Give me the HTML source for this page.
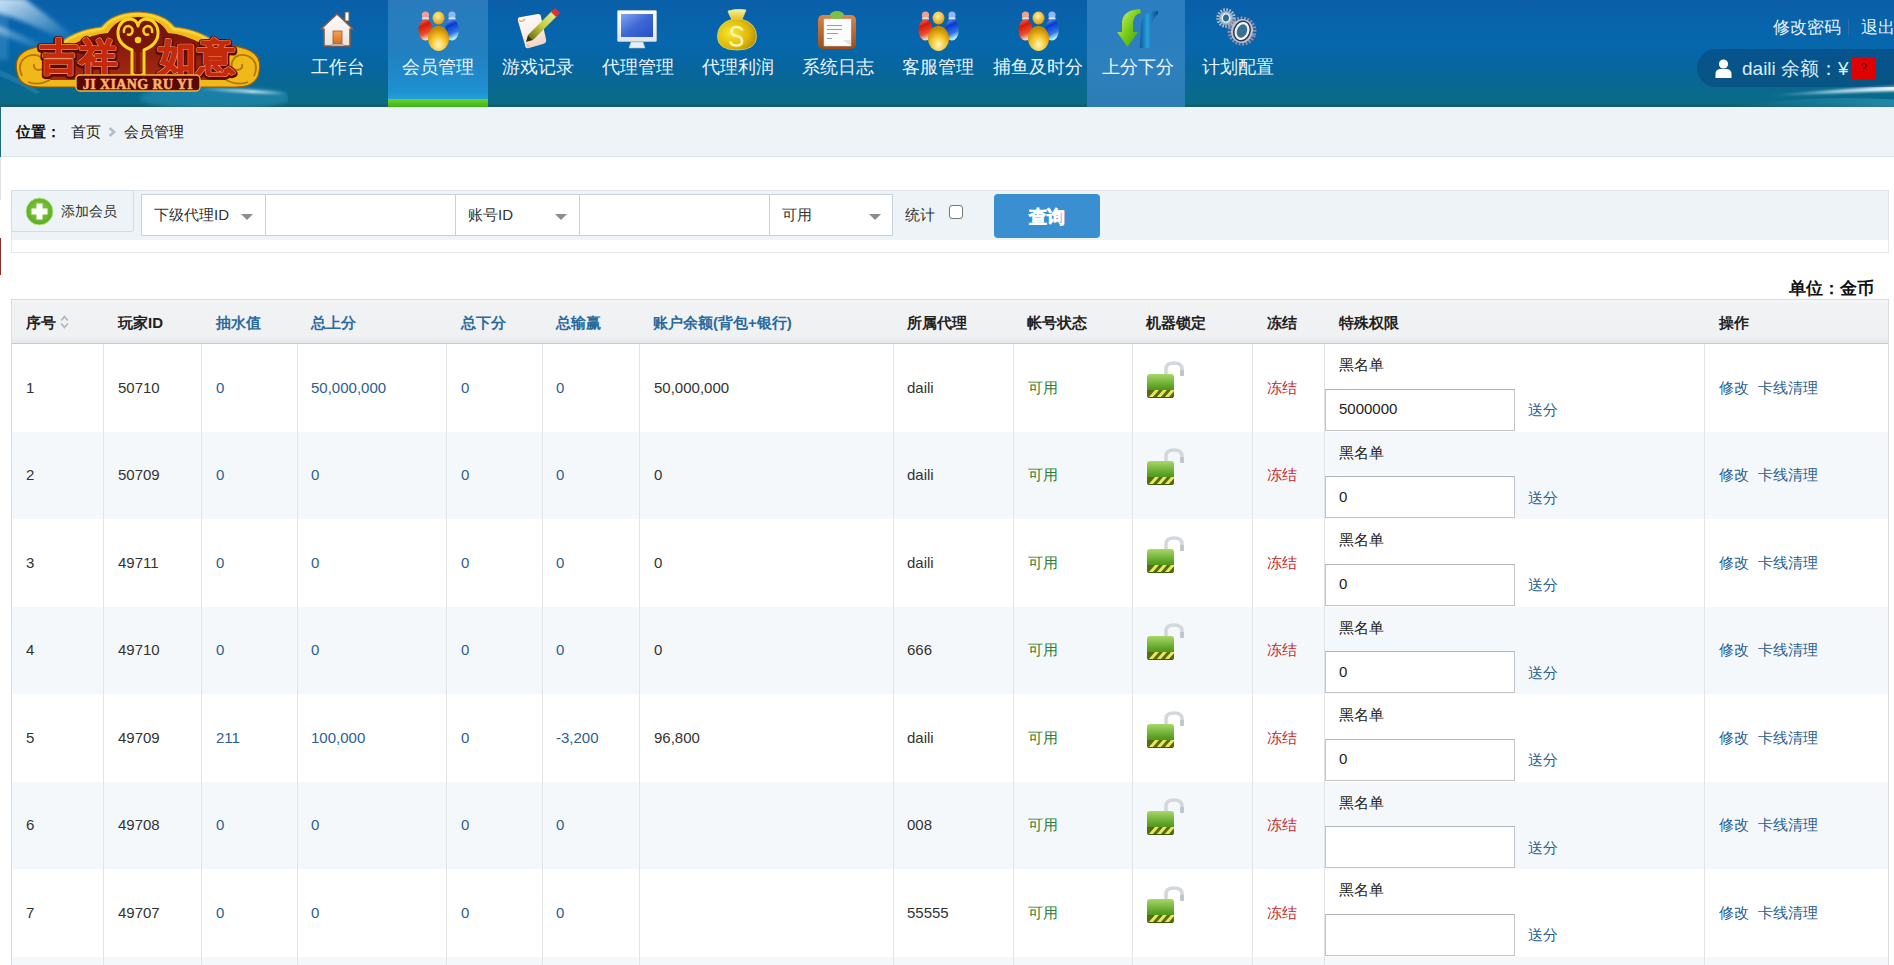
<!DOCTYPE html>
<html><head><meta charset="utf-8">
<style>
*{margin:0;padding:0;box-sizing:border-box}
html,body{width:1894px;height:965px;overflow:hidden;background:#fff;font-family:"Liberation Sans",sans-serif;color:#333}
.abs{position:absolute}
.t{position:absolute;white-space:nowrap}
#hdr{position:absolute;left:0;top:0;width:1894px;height:107px;background:linear-gradient(#0a5fa8 0%,#0667ad 40%,#07659f 62%,#0a6b86 96%,#1a5868 100%);overflow:hidden}
.nav{position:absolute;top:0;width:100px;height:107px;color:#eaf6fd;font-size:18px}
.nav .nt{position:absolute;left:0;width:100px;top:56px;line-height:22px;text-align:center;white-space:nowrap}
.nav svg{position:absolute}
.sel{position:absolute;top:194px;height:42px;background:#fff;border:1px solid #c8d2db;font-size:15px;color:#333}
.sel .v{position:absolute;left:12px;top:11px;line-height:18px;white-space:nowrap}
.sel .ar{position:absolute;left:99px;top:19px;width:0;height:0;border-left:6px solid transparent;border-right:6px solid transparent;border-top:6px solid #8c8c8c}
.inp{position:absolute;top:194px;height:42px;background:#fff;border:1px solid #c8d2db}
.th{position:absolute;top:313px;line-height:20px;font-size:15px;font-weight:bold;color:#222;white-space:nowrap}
.th.b{color:#2b6a9c}
.vl{position:absolute;width:1px;background:#e2e4e6}
.row{position:absolute;left:12px;width:1876px}
.c{position:absolute;line-height:20px;font-size:15px;white-space:nowrap;color:#333}
.lk{color:#2b6190}
.gr{color:#2f7d34}
.rd{color:#c22a2e}
</style></head><body>
<div id="hdr">
<svg class="abs" style="left:0;top:0" width="288" height="107" viewBox="0 0 288 107">
<defs>
<linearGradient id="lgold" x1="0" y1="0" x2="0" y2="1"><stop offset="0" stop-color="#fff07a"/><stop offset="0.45" stop-color="#f8c818"/><stop offset="1" stop-color="#d89a08"/></linearGradient>
<linearGradient id="lred" x1="0" y1="0" x2="0" y2="1"><stop offset="0" stop-color="#e03a12"/><stop offset="1" stop-color="#b82008"/></linearGradient>
<linearGradient id="lint" x1="0" y1="0" x2="0" y2="1"><stop offset="0" stop-color="#6a0e08"/><stop offset="1" stop-color="#a82a12"/></linearGradient>
<linearGradient id="streak" x1="0" y1="0" x2="1" y2="0"><stop offset="0" stop-color="#fff" stop-opacity="0"/><stop offset="0.6" stop-color="#e8f8ff" stop-opacity="0.85"/><stop offset="1" stop-color="#fff" stop-opacity="0"/></linearGradient>
<linearGradient id="streak2" x1="0" y1="0" x2="1" y2="1"><stop offset="0" stop-color="#f0faff" stop-opacity="0.9"/><stop offset="1" stop-color="#bfe6ff" stop-opacity="0"/></linearGradient>
</defs>
<filter id="lblur"><feGaussianBlur stdDeviation="2"/></filter><path d="M-5 -2 L24 -2 Q50 18 74 36 L62 40 Q30 22 -5 12 Z" fill="url(#streak2)" opacity="1" filter="url(#lblur)"/><path d="M-5 0 L8 0 L8 60 L-5 60 Z" fill="#a8dcff" opacity="0.18" filter="url(#lblur)"/>
<path d="M-5 24 Q25 36 52 50 L48 53 Q20 42 -5 32 Z" fill="url(#streak2)" opacity="0.55" filter="url(#lblur)"/>
<path d="M0 70 Q20 78 40 92 L36 94 Q16 82 0 76 Z" fill="#bfe6ff" opacity="0.12"/>
<ellipse cx="215" cy="98" rx="75" ry="12" fill="#3aa8d8" opacity="0.35" filter="url(#lblur)"/><path d="M200 87 Q240 89 288 92 L288 95 Q240 93 200 90 Z" fill="url(#streak)" opacity="0.9" filter="url(#glow)"/>
<filter id="glow"><feGaussianBlur stdDeviation="0.8"/></filter>
<path d="M17 72 Q13 55 30 49 Q42 44 56 48 Q72 30 102 27 Q112 13 138 12 Q164 13 174 27 Q204 30 220 48 Q234 44 246 49 Q263 55 259 72 Q257 87 236 87 L40 87 Q19 87 17 72 Z" fill="#f0b818" stroke="#a05a00" stroke-width="1.2"/>
<path d="M50 80 Q52 56 74 44 Q92 34 108 33 Q116 18 138 17 Q160 18 168 33 Q184 34 202 44 Q224 56 226 80 Z" fill="url(#lint)"/>
<path d="M56 48 Q72 32 102 29 Q112 15 138 14 Q164 15 174 29 Q204 32 220 48" fill="none" stroke="#ffe84a" stroke-width="2.2" filter="url(#glow)"/>
<g fill="none" stroke="#b87400" stroke-width="1.8">
<path d="M22 76 Q16 62 28 56 Q40 52 44 62 Q46 70 38 70 Q33 69 34 64"/><path d="M28 82 Q38 86 50 80"/>
<path d="M254 76 Q260 62 248 56 Q236 52 232 62 Q230 70 238 70 Q243 69 242 64"/><path d="M248 82 Q238 86 226 80"/>
</g>
<path d="M132 74 L132 50 Q117 44 118 31 Q120 19 131 19 Q137 20 138 26 Q139 20 145 19 Q156 19 158 31 Q159 44 144 50 L144 74 Q138 78 132 74 Z" fill="#7a160a" stroke="#ffd420" stroke-width="3" stroke-linejoin="round"/>
<g fill="none" stroke="#ffd420" stroke-width="2.4"><path d="M124 33 Q123 26 129 26 Q134 28 132 33 Q130 36 127 34"/><path d="M152 33 Q153 26 147 26 Q142 28 144 33 Q146 36 149 34"/></g>
<circle cx="138" cy="40" r="3.2" fill="#ffd420"/>
<path d="M135 52 L135 72 M141 52 L141 72" stroke="#9a2a10" stroke-width="2"/>
<g font-size="38" font-weight="bold" text-anchor="middle">
<text x="79" y="71" fill="none" stroke="#5a0a04" stroke-width="6" stroke-linejoin="round" letter-spacing="1">吉祥</text>
<text x="197" y="71" fill="none" stroke="#5a0a04" stroke-width="6" stroke-linejoin="round" letter-spacing="1">如意</text>
<text x="79" y="70" fill="url(#lred)" stroke="#ffa878" stroke-width="2.4" paint-order="stroke" stroke-linejoin="round" letter-spacing="1">吉祥</text>
<text x="197" y="70" fill="url(#lred)" stroke="#ffa878" stroke-width="2.4" paint-order="stroke" stroke-linejoin="round" letter-spacing="1">如意</text>
<text x="79" y="70" fill="url(#lred)" stroke="#c42a0a" stroke-width="1.3" letter-spacing="1">吉祥</text>
<text x="197" y="70" fill="url(#lred)" stroke="#c42a0a" stroke-width="1.3" letter-spacing="1">如意</text>
</g>
<rect x="76" y="75" width="124" height="16" rx="4" fill="#5a0a06" stroke="#f3b63a" stroke-width="1.4"/>
<text x="138" y="88.5" text-anchor="middle" font-family="Liberation Serif" font-size="14" font-weight="bold" fill="#ffb26a" stroke="#ffb26a" stroke-width="0.5" letter-spacing="0.4" transform="translate(138 0) scale(1 1.05) translate(-138 -4)">JI XIANG RU YI</text>
</svg>
<div class="nav" style="left:288px;">
<svg style="left:29px;top:7px" width="40" height="40" viewBox="0 0 40 40">
<defs><linearGradient id="hw" x1="0" y1="0" x2="0" y2="1"><stop offset="0" stop-color="#ffffff"/><stop offset="1" stop-color="#e9e2dc"/></linearGradient>
<linearGradient id="hd" x1="0" y1="0" x2="0" y2="1"><stop offset="0" stop-color="#f2a35a"/><stop offset="1" stop-color="#d66e22"/></linearGradient></defs>
<rect x="28" y="5" width="4" height="9" fill="#fff" stroke="#8a5a44" stroke-width="1"/>
<path d="M4 22 L20 7 L36 22 L33 22 L33 39 L7 39 L7 22 Z" fill="url(#hw)" stroke="#8a5a44" stroke-width="1.6" stroke-linejoin="round"/>
<rect x="16" y="24" width="9" height="13" fill="url(#hd)" stroke="#a8561c" stroke-width="0.8"/>
<rect x="14" y="37" width="13" height="2" fill="#b9b3ae"/>
</svg>
<div class="nt">工作台</div>
</div>
<div class="nav" style="left:388px;background:linear-gradient(#2a7bbd 0%,#2280c0 50%,#1e90d0 85%,#22a0dc 92%);">
<svg style="left:30px;top:10px" width="42" height="42" viewBox="0 0 42 42">
<defs>
<linearGradient id="pr" x1="0" y1="0" x2="0.3" y2="1"><stop offset="0" stop-color="#ff8070"/><stop offset="0.35" stop-color="#d81808"/><stop offset="0.75" stop-color="#e85030"/><stop offset="1" stop-color="#ffd0b0"/></linearGradient>
<linearGradient id="pb" x1="0" y1="0" x2="0.3" y2="1"><stop offset="0" stop-color="#80b8ff"/><stop offset="0.35" stop-color="#0838d0"/><stop offset="0.75" stop-color="#3078e0"/><stop offset="1" stop-color="#b0f0ff"/></linearGradient>
<radialGradient id="py" cx="0.5" cy="0.75" r="0.65"><stop offset="0" stop-color="#fff8c0"/><stop offset="0.5" stop-color="#f8c830"/><stop offset="1" stop-color="#c88a00"/></radialGradient>
<radialGradient id="pyh" cx="0.45" cy="0.35" r="0.6"><stop offset="0" stop-color="#fff4a0"/><stop offset="1" stop-color="#e0a010"/></radialGradient>
</defs>
<circle cx="7.5" cy="5" r="3.6" fill="#f0a090"/><rect x="4" y="7.5" width="7" height="2" fill="#ffffff" opacity="0.8"/>
<ellipse cx="7.5" cy="20" rx="7" ry="10.5" fill="url(#pr)"/>
<circle cx="34" cy="5" r="3.6" fill="#90b8f0"/><rect x="30.5" y="7.5" width="7" height="2" fill="#ffffff" opacity="0.8"/>
<ellipse cx="34" cy="20" rx="6.8" ry="10.5" fill="url(#pb)"/>
<ellipse cx="20.5" cy="8" rx="6" ry="6.5" fill="url(#pyh)"/>
<ellipse cx="20.5" cy="28.5" rx="10.5" ry="12.5" fill="url(#py)"/>
</svg>
<div class="nt">会员管理</div>
<div class="abs" style="left:0;top:99px;width:100px;height:8px;background:linear-gradient(#6fd02a,#3cb518)"></div>
</div>
<div class="nav" style="left:488px;">
<svg style="left:29px;top:8px" width="44" height="42" viewBox="0 0 44 42">
<defs><linearGradient id="sc" x1="0" y1="0" x2="0.4" y2="1"><stop offset="0" stop-color="#ffffff"/><stop offset="0.6" stop-color="#fbeee8"/><stop offset="1" stop-color="#f0d8c8"/></linearGradient>
<linearGradient id="pc" x1="0" y1="1" x2="1" y2="0"><stop offset="0" stop-color="#5a6a10"/><stop offset="0.5" stop-color="#c8d040"/><stop offset="1" stop-color="#e8f0a0"/></linearGradient></defs>
<path d="M1 13 Q0 9 4 9 L21 6 Q24 6 24 9 L29 31 Q30 35 26 36 L12 40 Q8 41 8 37 Z" fill="url(#sc)"/>
<path d="M2 12 Q5 15 8 11" fill="none" stroke="#e8b090" stroke-width="1.5"/>
<path d="M9 37 Q13 34 12 40" fill="#f0c0a8"/>
<path d="M11 27 L35 3 L40 8 L16 32 Z" fill="url(#pc)"/>
<path d="M34 4 L38 0 L43 5 L39 9 Z" fill="#e03030"/>
<path d="M11 27 L16 32 L9 34 Z" fill="#3a3010"/>
</svg>
<div class="nt">游戏记录</div>
</div>
<div class="nav" style="left:588px;">
<svg style="left:29px;top:10px" width="40" height="40" viewBox="0 0 40 40">
<defs><linearGradient id="ms" x1="0" y1="0" x2="1" y2="1"><stop offset="0" stop-color="#7fa6ee"/><stop offset="0.5" stop-color="#3d66d6"/><stop offset="1" stop-color="#2a4fc0"/></linearGradient>
<linearGradient id="mf" x1="0" y1="0" x2="0" y2="1"><stop offset="0" stop-color="#ffffff"/><stop offset="1" stop-color="#dfe6ee"/></linearGradient></defs>
<rect x="0.5" y="0.5" width="39" height="31" rx="1" fill="url(#mf)" stroke="#b8c4d0" stroke-width="0.8"/>
<rect x="4" y="4" width="32" height="23" fill="url(#ms)"/>
<path d="M14 32 L26 32 L28 38 L12 38 Z" fill="#e8eef4" stroke="#b0bcc8" stroke-width="0.6"/>
</svg>
<div class="nt">代理管理</div>
</div>
<div class="nav" style="left:688px;">
<svg style="left:28px;top:9px" width="42" height="42" viewBox="0 0 42 42">
<defs><radialGradient id="mb" cx="0.35" cy="0.45" r="0.75"><stop offset="0" stop-color="#f8e830"/><stop offset="0.6" stop-color="#e0b808"/><stop offset="1" stop-color="#b08000"/></radialGradient>
<linearGradient id="mk" x1="0" y1="0" x2="0" y2="1"><stop offset="0" stop-color="#f0f8a0"/><stop offset="1" stop-color="#f0b010"/></linearGradient></defs>
<path d="M12 2 Q21 -1 30 1 Q28 6 25 12 L17 12 Q13 6 12 2 Z" fill="url(#mk)" stroke="#d8e890" stroke-width="0.8"/>
<path d="M17 10 Q1.5 14 1.5 27.5 Q1.5 41 21 41 Q40.5 41 40.5 27.5 Q40.5 14 25 10 Z" fill="url(#mb)" stroke="#c8e070" stroke-width="0.8"/>
<path d="M26 20.5 Q24 18 20.5 18 Q15.5 18 15.5 22.5 Q15.5 26 20.5 27 Q26 28 26 32 Q26 36.5 20.5 36.5 Q16 36.5 14.5 33.5" fill="none" stroke="#fff4b0" stroke-width="2.6" stroke-linecap="round"/>
</svg>
<div class="nt">代理利润</div>
</div>
<div class="nav" style="left:788px;">
<svg style="left:29px;top:10px" width="40" height="40" viewBox="0 0 40 40">
<defs><linearGradient id="cb" x1="0" y1="0" x2="0" y2="1"><stop offset="0" stop-color="#d8874a"/><stop offset="1" stop-color="#9a4d1c"/></linearGradient></defs>
<rect x="1" y="5" width="38" height="34" rx="5" fill="url(#cb)"/>
<rect x="7" y="9" width="27" height="27" fill="#fafcfe" stroke="#d0d8e0" stroke-width="0.5"/>
<path d="M26 30 L34 30 L34 36 Z" fill="#dfe4ea"/>
<ellipse cx="20" cy="5" rx="7" ry="4" fill="#7cc04a"/>
<rect x="10" y="15" width="15" height="1" fill="#8aa0c0"/><rect x="10" y="19" width="15" height="1" fill="#8aa0c0"/>
<rect x="10" y="23" width="11" height="1" fill="#8aa0c0"/><rect x="10" y="28" width="5" height="1" fill="#8aa0c0"/>
</svg>
<div class="nt">系统日志</div>
</div>
<div class="nav" style="left:888px;">
<svg style="left:30px;top:10px" width="42" height="42" viewBox="0 0 42 42">
<defs>
<linearGradient id="pr" x1="0" y1="0" x2="0.3" y2="1"><stop offset="0" stop-color="#ff8070"/><stop offset="0.35" stop-color="#d81808"/><stop offset="0.75" stop-color="#e85030"/><stop offset="1" stop-color="#ffd0b0"/></linearGradient>
<linearGradient id="pb" x1="0" y1="0" x2="0.3" y2="1"><stop offset="0" stop-color="#80b8ff"/><stop offset="0.35" stop-color="#0838d0"/><stop offset="0.75" stop-color="#3078e0"/><stop offset="1" stop-color="#b0f0ff"/></linearGradient>
<radialGradient id="py" cx="0.5" cy="0.75" r="0.65"><stop offset="0" stop-color="#fff8c0"/><stop offset="0.5" stop-color="#f8c830"/><stop offset="1" stop-color="#c88a00"/></radialGradient>
<radialGradient id="pyh" cx="0.45" cy="0.35" r="0.6"><stop offset="0" stop-color="#fff4a0"/><stop offset="1" stop-color="#e0a010"/></radialGradient>
</defs>
<circle cx="7.5" cy="5" r="3.6" fill="#f0a090"/><rect x="4" y="7.5" width="7" height="2" fill="#ffffff" opacity="0.8"/>
<ellipse cx="7.5" cy="20" rx="7" ry="10.5" fill="url(#pr)"/>
<circle cx="34" cy="5" r="3.6" fill="#90b8f0"/><rect x="30.5" y="7.5" width="7" height="2" fill="#ffffff" opacity="0.8"/>
<ellipse cx="34" cy="20" rx="6.8" ry="10.5" fill="url(#pb)"/>
<ellipse cx="20.5" cy="8" rx="6" ry="6.5" fill="url(#pyh)"/>
<ellipse cx="20.5" cy="28.5" rx="10.5" ry="12.5" fill="url(#py)"/>
</svg>
<div class="nt">客服管理</div>
</div>
<div class="nav" style="left:988px;">
<svg style="left:30px;top:10px" width="42" height="42" viewBox="0 0 42 42">
<defs>
<linearGradient id="pr" x1="0" y1="0" x2="0.3" y2="1"><stop offset="0" stop-color="#ff8070"/><stop offset="0.35" stop-color="#d81808"/><stop offset="0.75" stop-color="#e85030"/><stop offset="1" stop-color="#ffd0b0"/></linearGradient>
<linearGradient id="pb" x1="0" y1="0" x2="0.3" y2="1"><stop offset="0" stop-color="#80b8ff"/><stop offset="0.35" stop-color="#0838d0"/><stop offset="0.75" stop-color="#3078e0"/><stop offset="1" stop-color="#b0f0ff"/></linearGradient>
<radialGradient id="py" cx="0.5" cy="0.75" r="0.65"><stop offset="0" stop-color="#fff8c0"/><stop offset="0.5" stop-color="#f8c830"/><stop offset="1" stop-color="#c88a00"/></radialGradient>
<radialGradient id="pyh" cx="0.45" cy="0.35" r="0.6"><stop offset="0" stop-color="#fff4a0"/><stop offset="1" stop-color="#e0a010"/></radialGradient>
</defs>
<circle cx="7.5" cy="5" r="3.6" fill="#f0a090"/><rect x="4" y="7.5" width="7" height="2" fill="#ffffff" opacity="0.8"/>
<ellipse cx="7.5" cy="20" rx="7" ry="10.5" fill="url(#pr)"/>
<circle cx="34" cy="5" r="3.6" fill="#90b8f0"/><rect x="30.5" y="7.5" width="7" height="2" fill="#ffffff" opacity="0.8"/>
<ellipse cx="34" cy="20" rx="6.8" ry="10.5" fill="url(#pb)"/>
<ellipse cx="20.5" cy="8" rx="6" ry="6.5" fill="url(#pyh)"/>
<ellipse cx="20.5" cy="28.5" rx="10.5" ry="12.5" fill="url(#py)"/>
</svg>
<div class="nt">捕鱼及时分</div>
</div>
<div class="nav" style="left:1088px;">
<div class="abs" style="left:-1px;top:0;width:98px;height:107px;background:linear-gradient(#2b7ec0,#2d80bd 60%,#2b7db4)"></div>
<svg style="left:29px;top:8px" width="42" height="42" viewBox="0 0 42 42">
<defs><linearGradient id="ag" x1="0" y1="0" x2="1" y2="1"><stop offset="0" stop-color="#d8f880"/><stop offset="0.5" stop-color="#7acc18"/><stop offset="1" stop-color="#3a9a10"/></linearGradient>
<linearGradient id="ab" x1="0" y1="0" x2="1" y2="0"><stop offset="0" stop-color="#0a5a98"/><stop offset="0.4" stop-color="#2aa0e0"/><stop offset="1" stop-color="#0a4a88"/></linearGradient></defs>
<path d="M23 40 L34 40 L34 22 Q35 10 41 6 L41 3 Q26 3 24 17 Z" fill="url(#ab)"/>
<path d="M23 1 Q6 2 5 14 L5 24 L0 24 L10.5 39 L21 24 L16 24 L16 14 Q17 6 24 5 Z" fill="url(#ag)"/>
</svg>
<div class="nt">上分下分</div>
</div>
<div class="nav" style="left:1188px;">
<svg style="left:28px;top:7px" width="42" height="42" viewBox="0 0 42 42">
<defs><radialGradient id="gg" cx="0.5" cy="0.5" r="0.5"><stop offset="0" stop-color="#ffffff"/><stop offset="0.6" stop-color="#c8d4e0"/><stop offset="1" stop-color="#8a98a8"/></radialGradient></defs>
<g transform="translate(10,11)">
<circle r="8" fill="none" stroke="#b0bccc" stroke-width="3.5" stroke-dasharray="1.6 1.3"/>
<circle r="7" fill="url(#gg)"/><ellipse rx="3.6" ry="4.2" fill="#2a6a8a" stroke="#e8f4f8" stroke-width="1.2"/></g>
<g transform="translate(26,24) rotate(20)">
<circle r="12.5" fill="none" stroke="#9a8ca8" stroke-width="4" stroke-dasharray="1.8 1.5"/>
<ellipse rx="11" ry="12" fill="#b8c4d4"/><ellipse rx="8" ry="10" fill="#f0f4f8" stroke="#303848" stroke-width="1.5"/><ellipse rx="5" ry="7" fill="#3a7090"/></g>
</svg>
<div class="nt">计划配置</div>
</div>
<div class="t" style="left:1773px;top:17px;font-size:16.5px;line-height:20px;color:#e6f2fb">修改密码</div>
<div class="abs" style="left:1848px;top:19px;width:1px;height:16px;background:#2f6fa6"></div>
<div class="t" style="left:1861px;top:17px;font-size:16.5px;line-height:20px;color:#e6f2fb">退出</div>
<svg class="abs" style="left:1690px;top:70px" width="204" height="37" viewBox="0 0 204 37"><defs><linearGradient id="sw" x1="0" y1="0" x2="1" y2="0"><stop offset="0" stop-color="#bfeaff" stop-opacity="0"/><stop offset="0.5" stop-color="#d8f4ff" stop-opacity="0.7"/><stop offset="1" stop-color="#f4fcff" stop-opacity="1"/></linearGradient><linearGradient id="sw2" x1="0" y1="0" x2="1" y2="0"><stop offset="0" stop-color="#30a0d0" stop-opacity="0"/><stop offset="1" stop-color="#40b0e0" stop-opacity="0.45"/></linearGradient><filter id="swb" x="-0.2" y="-1" width="1.4" height="3"><feGaussianBlur stdDeviation="1.1"/></filter></defs><path d="M40 37 Q120 24 210 30 L210 37 Z" fill="url(#sw2)"/><path d="M80 25 Q150 19 210 15 L210 21 Q150 23 80 26 Z" fill="url(#sw)" filter="url(#swb)"/></svg>
<div class="abs" style="left:1697px;top:49px;width:220px;height:38px;border-radius:19px;background:rgba(8,70,120,0.55)"></div>
<svg class="abs" style="left:1715px;top:59px" width="17" height="19" viewBox="0 0 17 19"><circle cx="8.5" cy="5" r="4.6" fill="#fff"/><path d="M0.5 19 L0.5 15 Q0.5 10.5 5 10 L12 10 Q16.5 10.5 16.5 15 L16.5 19 Z" fill="#fff"/></svg>
<div class="t" style="left:1742px;top:58px;font-size:19px;line-height:22px;color:#d8eefb">daili 余额：¥</div>
<div class="abs" style="left:1851px;top:57px;width:25px;height:23px;border-radius:3px;background:#e00202;color:#5a0000;font-size:12px;line-height:23px;text-align:center">?</div>

</div>
<div class="abs" style="left:0;top:107px;width:1894px;height:50px;background:#eef3f8;border-top:1px solid #e4f7fb;border-bottom:1px solid #dde4eb"></div>
<div class="abs" style="left:0;top:107px;width:1px;height:50px;background:#1f6a80"></div>
<div class="t" style="left:16px;top:122px;font-size:14.5px;line-height:20px;font-weight:bold;color:#111">位置：</div>
<div class="t" style="left:71px;top:122px;font-size:15px;line-height:20px;color:#222">首页</div>
<svg class="abs" style="left:108px;top:127px" width="8" height="10" viewBox="0 0 8 10"><path d="M1.5 1 L6 5 L1.5 9" fill="none" stroke="#b4bec6" stroke-width="2.6"/></svg>
<div class="t" style="left:124px;top:122px;font-size:15px;line-height:20px;color:#222">会员管理</div>

<div class="abs" style="left:0;top:157px;width:1px;height:43px;background:#dfe3e6"></div>
<div class="abs" style="left:0;top:238px;width:1px;height:37px;background:#8a2a22"></div>
<div class="abs" style="left:11px;top:190px;width:1878px;height:51px;background:#eef3f8;border:1px solid #dfe5eb"></div>
<div class="abs" style="left:11px;top:240px;width:1878px;height:13px;background:#fff;border:1px solid #e6e9ec;border-top:none"></div>
<div class="abs" style="left:11px;top:190px;width:123px;height:42px;background:#eef3f8;border:1px solid #d3dbe3;border-radius:2px"></div>
<svg class="abs" style="left:25px;top:197px" width="29" height="29" viewBox="0 0 29 29"><defs><radialGradient id="pg" cx="0.5" cy="0.45" r="0.55"><stop offset="0" stop-color="#8ed04a"/><stop offset="1" stop-color="#5aaa22"/></radialGradient></defs><circle cx="14.5" cy="14.5" r="13.5" fill="url(#pg)" stroke="#b8e890" stroke-width="1"/><path d="M11.5 6.5 H17.5 V11.5 H22.5 V17.5 H17.5 V22.5 H11.5 V17.5 H6.5 V11.5 H11.5 Z" fill="#fff"/></svg>
<div class="t" style="left:61px;top:201px;font-size:14px;line-height:20px;color:#333">添加会员</div>
<div class="sel" style="left:141px;width:125px"><div class="v">下级代理ID</div><div class="ar"></div></div>
<div class="inp" style="left:265px;width:191px"></div>
<div class="sel" style="left:455px;width:125px"><div class="v">账号ID</div><div class="ar"></div></div>
<div class="inp" style="left:579px;width:191px"></div>
<div class="sel" style="left:769px;width:124px"><div class="v">可用</div><div class="ar"></div></div>
<div class="t" style="left:905px;top:205px;font-size:15px;line-height:20px;color:#333">统计</div>
<div class="abs" style="left:949px;top:205px;width:14px;height:14px;border:1px solid #767676;border-radius:3px;background:#fff"></div>
<div class="abs" style="left:994px;top:194px;width:106px;height:44px;border-radius:4px;background:#3a8fd1;color:#fff;font-size:18px;font-weight:bold;line-height:46px;text-align:center;-webkit-text-stroke:0.7px #fff">查询</div>

<div class="t" style="left:1789px;top:278px;font-size:17px;line-height:22px;font-weight:bold;color:#111">单位：金币</div>
<div class="abs" style="left:11px;top:299px;width:1878px;height:700px;border:1px solid #d8dcdf;border-bottom:none"></div>
<div class="abs" style="left:12px;top:300px;width:1876px;height:43px;background:linear-gradient(#f8f9fa 0px,#f0f2f4 3px,#eff1f3 36px,#e4e7e9 43px)"></div>
<div class="abs" style="left:12px;top:343px;width:1876px;height:1px;background:#c6cacd"></div>
<div class="th" style="left:26px">序号</div>
<div class="th" style="left:118px">玩家ID</div>
<div class="th b" style="left:216px">抽水值</div>
<div class="th b" style="left:311px">总上分</div>
<div class="th b" style="left:461px">总下分</div>
<div class="th b" style="left:556px">总输赢</div>
<div class="th b" style="left:653px">账户余额(背包+银行)</div>
<div class="th" style="left:907px">所属代理</div>
<div class="th" style="left:1027px">帐号状态</div>
<div class="th" style="left:1146px">机器锁定</div>
<div class="th" style="left:1267px">冻结</div>
<div class="th" style="left:1339px">特殊权限</div>
<div class="th" style="left:1719px">操作</div>
<svg class="abs" style="left:60px;top:315px" width="9" height="14" viewBox="0 0 9 14"><path d="M1.2 5.5 L4.5 1.5 L7.8 5.5 M1.2 8.5 L4.5 12.5 L7.8 8.5" fill="none" stroke="#b4b4b4" stroke-width="1.7"/></svg>
<div class="row" style="top:344.0px;height:87.5px;background:#ffffff"></div>
<div class="c " style="left:26px;top:377.75px">1</div>
<div class="c " style="left:118px;top:377.75px">50710</div>
<div class="c lk" style="left:216px;top:377.75px">0</div>
<div class="c lk" style="left:311px;top:377.75px">50,000,000</div>
<div class="c lk" style="left:461px;top:377.75px">0</div>
<div class="c lk" style="left:556px;top:377.75px">0</div>
<div class="c " style="left:654px;top:377.75px">50,000,000</div>
<div class="c " style="left:907px;top:377.75px">daili</div>
<div class="c gr" style="left:1028px;top:377.75px">可用</div>
<div class="c rd" style="left:1267px;top:377.75px">冻结</div>
<svg class="abs" style="left:1146px;top:360.75px" width="40" height="40" viewBox="0 0 40 40">
<defs><linearGradient id="lkg0" x1="0" y1="0" x2="0" y2="1"><stop offset="0" stop-color="#a8d86a"/><stop offset="0.55" stop-color="#5aa024"/><stop offset="1" stop-color="#3a7a10"/></linearGradient>
<clipPath id="lkc0"><rect x="1" y="13" width="27" height="24" rx="3"/></clipPath></defs>
<path d="M20 14 L20 8 Q20 2 28 2 Q36 2 36 8 L36 14" fill="none" stroke="#d4d8dc" stroke-width="3.6"/>
<rect x="34.2" y="9" width="3.6" height="6" fill="#bfc4c8"/>
<rect x="1" y="13" width="27" height="24" rx="3" fill="url(#lkg0)"/>
<g clip-path="url(#lkc0)"><rect x="1" y="29" width="27" height="9" fill="#5a6a12"/><path d="M2 37 L9 29 L13 29 L6 37 Z M10 37 L17 29 L21 29 L14 37 Z M18 37 L25 29 L29 29 L22 37 Z" fill="#e6e860"/><rect x="1" y="36" width="27" height="1.5" fill="#3a5a10"/></g>
</svg>
<div class="c" style="left:1339px;top:355.0px;font-size:15px;color:#222">黑名单</div>
<div class="abs" style="left:1325px;top:389px;width:190px;height:42px;background:#fff;border:1px solid #c4c4c4;border-top-color:#aeb4b8"></div>
<div class="c" style="left:1339px;top:399.0px;font-size:15px;color:#222">5000000</div>
<div class="c lk" style="left:1528px;top:400.0px;font-size:15px">送分</div>
<div class="c lk" style="left:1719px;top:377.75px">修改</div>
<div class="c lk" style="left:1758px;top:377.75px">卡线清理</div>
<div class="row" style="top:431.5px;height:87.5px;background:#f5f8fb"></div>
<div class="c " style="left:26px;top:465.25px">2</div>
<div class="c " style="left:118px;top:465.25px">50709</div>
<div class="c lk" style="left:216px;top:465.25px">0</div>
<div class="c lk" style="left:311px;top:465.25px">0</div>
<div class="c lk" style="left:461px;top:465.25px">0</div>
<div class="c lk" style="left:556px;top:465.25px">0</div>
<div class="c " style="left:654px;top:465.25px">0</div>
<div class="c " style="left:907px;top:465.25px">daili</div>
<div class="c gr" style="left:1028px;top:465.25px">可用</div>
<div class="c rd" style="left:1267px;top:465.25px">冻结</div>
<svg class="abs" style="left:1146px;top:448.25px" width="40" height="40" viewBox="0 0 40 40">
<defs><linearGradient id="lkg1" x1="0" y1="0" x2="0" y2="1"><stop offset="0" stop-color="#a8d86a"/><stop offset="0.55" stop-color="#5aa024"/><stop offset="1" stop-color="#3a7a10"/></linearGradient>
<clipPath id="lkc1"><rect x="1" y="13" width="27" height="24" rx="3"/></clipPath></defs>
<path d="M20 14 L20 8 Q20 2 28 2 Q36 2 36 8 L36 14" fill="none" stroke="#d4d8dc" stroke-width="3.6"/>
<rect x="34.2" y="9" width="3.6" height="6" fill="#bfc4c8"/>
<rect x="1" y="13" width="27" height="24" rx="3" fill="url(#lkg1)"/>
<g clip-path="url(#lkc1)"><rect x="1" y="29" width="27" height="9" fill="#5a6a12"/><path d="M2 37 L9 29 L13 29 L6 37 Z M10 37 L17 29 L21 29 L14 37 Z M18 37 L25 29 L29 29 L22 37 Z" fill="#e6e860"/><rect x="1" y="36" width="27" height="1.5" fill="#3a5a10"/></g>
</svg>
<div class="c" style="left:1339px;top:442.5px;font-size:15px;color:#222">黑名单</div>
<div class="abs" style="left:1325px;top:476px;width:190px;height:42px;background:#fff;border:1px solid #c4c4c4;border-top-color:#aeb4b8"></div>
<div class="c" style="left:1339px;top:486.5px;font-size:15px;color:#222">0</div>
<div class="c lk" style="left:1528px;top:487.5px;font-size:15px">送分</div>
<div class="c lk" style="left:1719px;top:465.25px">修改</div>
<div class="c lk" style="left:1758px;top:465.25px">卡线清理</div>
<div class="row" style="top:519.0px;height:87.5px;background:#ffffff"></div>
<div class="c " style="left:26px;top:552.75px">3</div>
<div class="c " style="left:118px;top:552.75px">49711</div>
<div class="c lk" style="left:216px;top:552.75px">0</div>
<div class="c lk" style="left:311px;top:552.75px">0</div>
<div class="c lk" style="left:461px;top:552.75px">0</div>
<div class="c lk" style="left:556px;top:552.75px">0</div>
<div class="c " style="left:654px;top:552.75px">0</div>
<div class="c " style="left:907px;top:552.75px">daili</div>
<div class="c gr" style="left:1028px;top:552.75px">可用</div>
<div class="c rd" style="left:1267px;top:552.75px">冻结</div>
<svg class="abs" style="left:1146px;top:535.75px" width="40" height="40" viewBox="0 0 40 40">
<defs><linearGradient id="lkg2" x1="0" y1="0" x2="0" y2="1"><stop offset="0" stop-color="#a8d86a"/><stop offset="0.55" stop-color="#5aa024"/><stop offset="1" stop-color="#3a7a10"/></linearGradient>
<clipPath id="lkc2"><rect x="1" y="13" width="27" height="24" rx="3"/></clipPath></defs>
<path d="M20 14 L20 8 Q20 2 28 2 Q36 2 36 8 L36 14" fill="none" stroke="#d4d8dc" stroke-width="3.6"/>
<rect x="34.2" y="9" width="3.6" height="6" fill="#bfc4c8"/>
<rect x="1" y="13" width="27" height="24" rx="3" fill="url(#lkg2)"/>
<g clip-path="url(#lkc2)"><rect x="1" y="29" width="27" height="9" fill="#5a6a12"/><path d="M2 37 L9 29 L13 29 L6 37 Z M10 37 L17 29 L21 29 L14 37 Z M18 37 L25 29 L29 29 L22 37 Z" fill="#e6e860"/><rect x="1" y="36" width="27" height="1.5" fill="#3a5a10"/></g>
</svg>
<div class="c" style="left:1339px;top:530.0px;font-size:15px;color:#222">黑名单</div>
<div class="abs" style="left:1325px;top:564px;width:190px;height:42px;background:#fff;border:1px solid #c4c4c4;border-top-color:#aeb4b8"></div>
<div class="c" style="left:1339px;top:574.0px;font-size:15px;color:#222">0</div>
<div class="c lk" style="left:1528px;top:575.0px;font-size:15px">送分</div>
<div class="c lk" style="left:1719px;top:552.75px">修改</div>
<div class="c lk" style="left:1758px;top:552.75px">卡线清理</div>
<div class="row" style="top:606.5px;height:87.5px;background:#f5f8fb"></div>
<div class="c " style="left:26px;top:640.25px">4</div>
<div class="c " style="left:118px;top:640.25px">49710</div>
<div class="c lk" style="left:216px;top:640.25px">0</div>
<div class="c lk" style="left:311px;top:640.25px">0</div>
<div class="c lk" style="left:461px;top:640.25px">0</div>
<div class="c lk" style="left:556px;top:640.25px">0</div>
<div class="c " style="left:654px;top:640.25px">0</div>
<div class="c " style="left:907px;top:640.25px">666</div>
<div class="c gr" style="left:1028px;top:640.25px">可用</div>
<div class="c rd" style="left:1267px;top:640.25px">冻结</div>
<svg class="abs" style="left:1146px;top:623.25px" width="40" height="40" viewBox="0 0 40 40">
<defs><linearGradient id="lkg3" x1="0" y1="0" x2="0" y2="1"><stop offset="0" stop-color="#a8d86a"/><stop offset="0.55" stop-color="#5aa024"/><stop offset="1" stop-color="#3a7a10"/></linearGradient>
<clipPath id="lkc3"><rect x="1" y="13" width="27" height="24" rx="3"/></clipPath></defs>
<path d="M20 14 L20 8 Q20 2 28 2 Q36 2 36 8 L36 14" fill="none" stroke="#d4d8dc" stroke-width="3.6"/>
<rect x="34.2" y="9" width="3.6" height="6" fill="#bfc4c8"/>
<rect x="1" y="13" width="27" height="24" rx="3" fill="url(#lkg3)"/>
<g clip-path="url(#lkc3)"><rect x="1" y="29" width="27" height="9" fill="#5a6a12"/><path d="M2 37 L9 29 L13 29 L6 37 Z M10 37 L17 29 L21 29 L14 37 Z M18 37 L25 29 L29 29 L22 37 Z" fill="#e6e860"/><rect x="1" y="36" width="27" height="1.5" fill="#3a5a10"/></g>
</svg>
<div class="c" style="left:1339px;top:617.5px;font-size:15px;color:#222">黑名单</div>
<div class="abs" style="left:1325px;top:651px;width:190px;height:42px;background:#fff;border:1px solid #c4c4c4;border-top-color:#aeb4b8"></div>
<div class="c" style="left:1339px;top:661.5px;font-size:15px;color:#222">0</div>
<div class="c lk" style="left:1528px;top:662.5px;font-size:15px">送分</div>
<div class="c lk" style="left:1719px;top:640.25px">修改</div>
<div class="c lk" style="left:1758px;top:640.25px">卡线清理</div>
<div class="row" style="top:694.0px;height:87.5px;background:#ffffff"></div>
<div class="c " style="left:26px;top:727.75px">5</div>
<div class="c " style="left:118px;top:727.75px">49709</div>
<div class="c lk" style="left:216px;top:727.75px">211</div>
<div class="c lk" style="left:311px;top:727.75px">100,000</div>
<div class="c lk" style="left:461px;top:727.75px">0</div>
<div class="c lk" style="left:556px;top:727.75px">-3,200</div>
<div class="c " style="left:654px;top:727.75px">96,800</div>
<div class="c " style="left:907px;top:727.75px">daili</div>
<div class="c gr" style="left:1028px;top:727.75px">可用</div>
<div class="c rd" style="left:1267px;top:727.75px">冻结</div>
<svg class="abs" style="left:1146px;top:710.75px" width="40" height="40" viewBox="0 0 40 40">
<defs><linearGradient id="lkg4" x1="0" y1="0" x2="0" y2="1"><stop offset="0" stop-color="#a8d86a"/><stop offset="0.55" stop-color="#5aa024"/><stop offset="1" stop-color="#3a7a10"/></linearGradient>
<clipPath id="lkc4"><rect x="1" y="13" width="27" height="24" rx="3"/></clipPath></defs>
<path d="M20 14 L20 8 Q20 2 28 2 Q36 2 36 8 L36 14" fill="none" stroke="#d4d8dc" stroke-width="3.6"/>
<rect x="34.2" y="9" width="3.6" height="6" fill="#bfc4c8"/>
<rect x="1" y="13" width="27" height="24" rx="3" fill="url(#lkg4)"/>
<g clip-path="url(#lkc4)"><rect x="1" y="29" width="27" height="9" fill="#5a6a12"/><path d="M2 37 L9 29 L13 29 L6 37 Z M10 37 L17 29 L21 29 L14 37 Z M18 37 L25 29 L29 29 L22 37 Z" fill="#e6e860"/><rect x="1" y="36" width="27" height="1.5" fill="#3a5a10"/></g>
</svg>
<div class="c" style="left:1339px;top:705.0px;font-size:15px;color:#222">黑名单</div>
<div class="abs" style="left:1325px;top:739px;width:190px;height:42px;background:#fff;border:1px solid #c4c4c4;border-top-color:#aeb4b8"></div>
<div class="c" style="left:1339px;top:749.0px;font-size:15px;color:#222">0</div>
<div class="c lk" style="left:1528px;top:750.0px;font-size:15px">送分</div>
<div class="c lk" style="left:1719px;top:727.75px">修改</div>
<div class="c lk" style="left:1758px;top:727.75px">卡线清理</div>
<div class="row" style="top:781.5px;height:87.5px;background:#f5f8fb"></div>
<div class="c " style="left:26px;top:815.25px">6</div>
<div class="c " style="left:118px;top:815.25px">49708</div>
<div class="c lk" style="left:216px;top:815.25px">0</div>
<div class="c lk" style="left:311px;top:815.25px">0</div>
<div class="c lk" style="left:461px;top:815.25px">0</div>
<div class="c lk" style="left:556px;top:815.25px">0</div>
<div class="c " style="left:907px;top:815.25px">008</div>
<div class="c gr" style="left:1028px;top:815.25px">可用</div>
<div class="c rd" style="left:1267px;top:815.25px">冻结</div>
<svg class="abs" style="left:1146px;top:798.25px" width="40" height="40" viewBox="0 0 40 40">
<defs><linearGradient id="lkg5" x1="0" y1="0" x2="0" y2="1"><stop offset="0" stop-color="#a8d86a"/><stop offset="0.55" stop-color="#5aa024"/><stop offset="1" stop-color="#3a7a10"/></linearGradient>
<clipPath id="lkc5"><rect x="1" y="13" width="27" height="24" rx="3"/></clipPath></defs>
<path d="M20 14 L20 8 Q20 2 28 2 Q36 2 36 8 L36 14" fill="none" stroke="#d4d8dc" stroke-width="3.6"/>
<rect x="34.2" y="9" width="3.6" height="6" fill="#bfc4c8"/>
<rect x="1" y="13" width="27" height="24" rx="3" fill="url(#lkg5)"/>
<g clip-path="url(#lkc5)"><rect x="1" y="29" width="27" height="9" fill="#5a6a12"/><path d="M2 37 L9 29 L13 29 L6 37 Z M10 37 L17 29 L21 29 L14 37 Z M18 37 L25 29 L29 29 L22 37 Z" fill="#e6e860"/><rect x="1" y="36" width="27" height="1.5" fill="#3a5a10"/></g>
</svg>
<div class="c" style="left:1339px;top:792.5px;font-size:15px;color:#222">黑名单</div>
<div class="abs" style="left:1325px;top:826px;width:190px;height:42px;background:#fff;border:1px solid #c4c4c4;border-top-color:#aeb4b8"></div>
<div class="c lk" style="left:1528px;top:837.5px;font-size:15px">送分</div>
<div class="c lk" style="left:1719px;top:815.25px">修改</div>
<div class="c lk" style="left:1758px;top:815.25px">卡线清理</div>
<div class="row" style="top:869.0px;height:87.5px;background:#ffffff"></div>
<div class="c " style="left:26px;top:902.75px">7</div>
<div class="c " style="left:118px;top:902.75px">49707</div>
<div class="c lk" style="left:216px;top:902.75px">0</div>
<div class="c lk" style="left:311px;top:902.75px">0</div>
<div class="c lk" style="left:461px;top:902.75px">0</div>
<div class="c lk" style="left:556px;top:902.75px">0</div>
<div class="c " style="left:907px;top:902.75px">55555</div>
<div class="c gr" style="left:1028px;top:902.75px">可用</div>
<div class="c rd" style="left:1267px;top:902.75px">冻结</div>
<svg class="abs" style="left:1146px;top:885.75px" width="40" height="40" viewBox="0 0 40 40">
<defs><linearGradient id="lkg6" x1="0" y1="0" x2="0" y2="1"><stop offset="0" stop-color="#a8d86a"/><stop offset="0.55" stop-color="#5aa024"/><stop offset="1" stop-color="#3a7a10"/></linearGradient>
<clipPath id="lkc6"><rect x="1" y="13" width="27" height="24" rx="3"/></clipPath></defs>
<path d="M20 14 L20 8 Q20 2 28 2 Q36 2 36 8 L36 14" fill="none" stroke="#d4d8dc" stroke-width="3.6"/>
<rect x="34.2" y="9" width="3.6" height="6" fill="#bfc4c8"/>
<rect x="1" y="13" width="27" height="24" rx="3" fill="url(#lkg6)"/>
<g clip-path="url(#lkc6)"><rect x="1" y="29" width="27" height="9" fill="#5a6a12"/><path d="M2 37 L9 29 L13 29 L6 37 Z M10 37 L17 29 L21 29 L14 37 Z M18 37 L25 29 L29 29 L22 37 Z" fill="#e6e860"/><rect x="1" y="36" width="27" height="1.5" fill="#3a5a10"/></g>
</svg>
<div class="c" style="left:1339px;top:880.0px;font-size:15px;color:#222">黑名单</div>
<div class="abs" style="left:1325px;top:914px;width:190px;height:42px;background:#fff;border:1px solid #c4c4c4;border-top-color:#aeb4b8"></div>
<div class="c lk" style="left:1528px;top:925.0px;font-size:15px">送分</div>
<div class="c lk" style="left:1719px;top:902.75px">修改</div>
<div class="c lk" style="left:1758px;top:902.75px">卡线清理</div>
<div class="row" style="top:956.5px;height:20px;background:#f5f8fb"></div>
<div class="vl" style="left:103px;top:344px;height:630px"></div>
<div class="vl" style="left:201px;top:344px;height:630px"></div>
<div class="vl" style="left:297px;top:344px;height:630px"></div>
<div class="vl" style="left:446px;top:344px;height:630px"></div>
<div class="vl" style="left:542px;top:344px;height:630px"></div>
<div class="vl" style="left:639px;top:344px;height:630px"></div>
<div class="vl" style="left:893px;top:344px;height:630px"></div>
<div class="vl" style="left:1013px;top:344px;height:630px"></div>
<div class="vl" style="left:1132px;top:344px;height:630px"></div>
<div class="vl" style="left:1252px;top:344px;height:630px"></div>
<div class="vl" style="left:1324px;top:344px;height:630px"></div>
<div class="vl" style="left:1704px;top:344px;height:630px"></div>
</body></html>
